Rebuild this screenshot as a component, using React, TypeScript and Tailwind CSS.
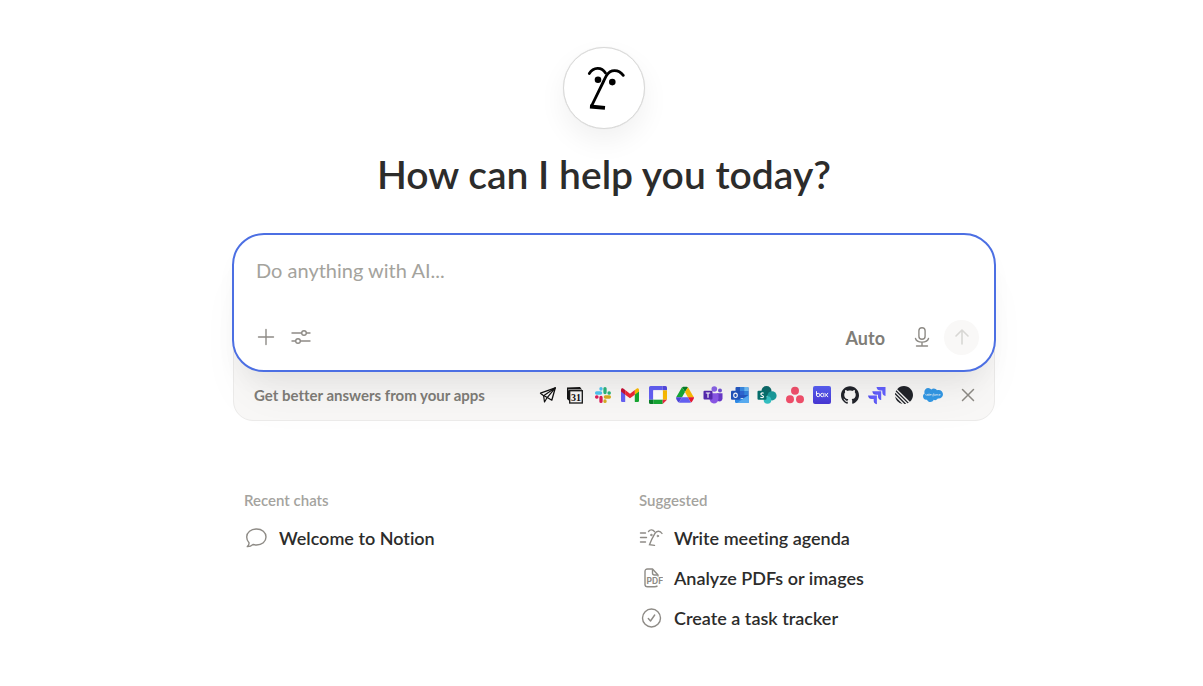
import type { ReactNode } from "react";
import { FaSalesforce } from "react-icons/fa";
import { SiGithub, SiLinear } from "react-icons/si";

function NotionFace() {
  return (
    <svg width="40" height="46" viewBox="0 0 40 46" fill="none" aria-hidden="true">
      <path d="M3.300 8.500C7.500 2 15.500 1.700 19.500 8" stroke="#000" strokeWidth="2.800" strokeLinecap="round" />
      <path d="M37.300 10.300C32.500 4 24.500 4 20.800 10C19.500 12 18.500 14.500 17 17.500L5.300 41.500" stroke="#000" strokeWidth="2.800" strokeLinecap="round" />
      <path d="M4 41.500L19 42.800" stroke="#000" strokeWidth="3.800" />
      <circle cx="12" cy="14.800" r="3.300" fill="#000" />
      <circle cx="26.300" cy="17.100" r="3.300" fill="#000" />
    </svg>
  );
}

function AppIcon({ label, children }: { label: string; children: ReactNode }) {
  return (
    <svg className="size-[18px] shrink-0 overflow-visible" viewBox="0 0 18 18" fill="none" role="img" aria-label={label}>
      {children}
    </svg>
  );
}

function ConnectedApps() {
  return (
    <div className="flex w-[404px] shrink-0 items-center justify-between">
      <AppIcon label="Notion Mail">
        <path d="M1.500 7.200L16.300 1.800L12.800 14.200L7.900 11.300L4 9.200Z" stroke="#111" strokeWidth="1.300" strokeLinejoin="round" />
        <path d="M16.300 1.800L4.600 9.700L5.500 16L8 11.800Z" stroke="#111" strokeWidth="1.200" strokeLinejoin="round" />
      </AppIcon>
      <AppIcon label="Notion Calendar">
        <path d="M1 1.500L14 1L15.500 3V4H4V15.500L1 13Z" fill="#161616" />
        <path d="M2.200 3.800H15" stroke="#f4f3f2" strokeWidth="0.800" />
        <rect x="3.700" y="4.700" width="12.600" height="12.300" fill="#f8f7f6" stroke="#161616" strokeWidth="1.300" />
        <text x="10" y="14.600" textAnchor="middle" fontFamily="Liberation Serif, serif" fontSize="10" fontWeight="700" fill="#111">31</text>
      </AppIcon>
      <AppIcon label="Slack">
        <g strokeWidth="3.300" strokeLinecap="round">
          <path d="M2.600 7H6.600M7 2.600V3" stroke="#50c5f1" />
          <path d="M11 2.600V6.600M15 7H15.300" stroke="#2bb67d" />
          <path d="M11.400 11H15.400M11 15V15.400" stroke="#d8ae22" />
          <path d="M7 11.400V15.400M2.600 11H3" stroke="#dc1d59" />
        </g>
      </AppIcon>
      <AppIcon label="Gmail">
        <path d="M0 5L4.200 8V16H1.300Q0 16 0 14.700Z" fill="#6661f5" />
        <path d="M18 5L13.800 8V16H16.700Q18 16 18 14.700Z" fill="#18a832" />
        <path d="M13.800 4L15.500 2.700C17 1.800 18 2.700 18 4V5.500L13.800 8.700Z" fill="#fbbc04" />
        <path d="M4.200 4L9 7.700L13.800 4V8.700L9 12.300L4.200 8.700Z" fill="#ef2636" />
        <path d="M0 4C0 2.500 1.200 1.800 2.500 2.700L4.200 4V8.700L0 5.500Z" fill="#c90f35" />
      </AppIcon>
      <AppIcon label="Google Calendar">
        <path d="M0 1.500Q0 0 1.500 0H13.700V4.300H4.300V13.700H0Z" fill="#6461f5" />
        <path d="M13.700 0H16.500Q18 0 18 1.500V4.300H13.700Z" fill="#554ae0" />
        <path d="M13.700 4.300H18V13.700H13.700Z" fill="#fbbc04" />
        <path d="M4.300 4.300H13.700V13.700H4.300Z" fill="#fff" />
        <path d="M4.300 13.700H13.700V18H4.300Z" fill="#16a834" />
        <path d="M0 13.700H4.300V18H1.500Q0 18 0 16.500Z" fill="#088029" />
        <path d="M13.700 13.700H18L13.700 18Z" fill="#eb2840" />
      </AppIcon>
      <AppIcon label="Google Drive">
        <path d="M6 1.200Q6.500 0.800 7.200 0.800H10.800Q11.500 0.800 12 1.200L9 6Z" fill="#08812a" />
        <path d="M0.300 11L6 1.200L9 6L6 11.300H0Z" fill="#17a837" />
        <path d="M12 1.200L17.700 11L17.900 11.500H12L9 6Z" fill="#fbbc04" />
        <path d="M6 11.300H12L14.900 16.500Q14.500 16.700 14 16.700H4Q3.400 16.700 3 16.500Z" fill="#6561f5" />
        <path d="M0.100 11.300H6L3 16.600Q2 16.200 1.500 15.300L0.200 13Z" fill="#5049dd" />
        <path d="M12 11.300H18Q18 12.300 17.600 13L16.300 15.300Q15.800 16.200 15 16.600Z" fill="#e91835" />
      </AppIcon>
      <AppIcon label="Microsoft Teams">
        <circle cx="16" cy="4.500" r="2" fill="#7352d3" />
        <circle cx="10.300" cy="3" r="2.800" fill="#8b65e9" />
        <path d="M13 7.200H18.500V12.500Q18 15.500 15.500 15.500Q13.500 15.500 12 13Z" fill="#6b3bcb" />
        <path d="M6 7.200H14.500V12.500Q14 17.500 9.800 17.500Q6.200 17.200 5.500 13Z" fill="#8b58e8" />
        <rect x="-0.500" y="4.800" width="9" height="8.800" rx="1" fill="#572ab0" />
        <path d="M1.800 7H6.200M4 7V11.700" stroke="#fff" strokeWidth="1.200" />
      </AppIcon>
      <AppIcon label="Outlook">
        <rect x="4.500" y="1" width="13" height="11" rx="1" fill="#275ac4" />
        <path d="M9 1H13.200V5H9Z" fill="#3a8ce6" />
        <path d="M13.200 1H16.500Q17.500 1 17.500 2V5H13.200Z" fill="#70bff7" />
        <path d="M9 5H13.200V9H9Z" fill="#2f67d5" />
        <path d="M13.200 5H17.500V9H13.200Z" fill="#3588e1" />
        <path d="M4 9L11 13L18 8.700V15.700Q18 17 16.700 17H5.300Q4 17 4 15.700Z" fill="#2f8be9" />
        <path d="M18 9L6 17H16.700Q18 17 18 15.700Z" fill="#59aef4" />
        <rect x="0" y="4.800" width="9" height="9" rx="1" fill="#2355bd" />
        <ellipse cx="4.500" cy="9.300" rx="1.800" ry="2.200" stroke="#fff" strokeWidth="1.100" />
      </AppIcon>
      <AppIcon label="SharePoint">
        <circle cx="8.500" cy="5" r="5" fill="#0d6b6b" />
        <circle cx="14" cy="9.800" r="4.600" fill="#1a9b9b" />
        <circle cx="9.500" cy="14" r="3.800" fill="#35c1c3" />
        <rect x="-0.500" y="4.800" width="9" height="9" rx="1" fill="#07716f" />
        <path d="M5.700 7.300C3.500 6.200 1.700 8.300 4 9.300C6.800 10.300 5.200 12.500 2.300 11.300" stroke="#fff" strokeWidth="1.200" />
      </AppIcon>
      <AppIcon label="Asana">
        <circle cx="9" cy="4.700" r="4" fill="#f2506c" />
        <circle cx="4" cy="13.200" r="4" fill="#f2506c" />
        <circle cx="14" cy="13.200" r="4" fill="#f2506c" />
      </AppIcon>
      <AppIcon label="Box">
        <defs>
          <linearGradient id="box-fill" x1="0" y1="0" x2="0" y2="1">
            <stop stopColor="#5961f6" />
            <stop offset="1" stopColor="#4837d4" />
          </linearGradient>
        </defs>
        <rect width="18" height="18" rx="2" fill="url(#box-fill)" />
        <g stroke="#fff" strokeWidth="1">
          <path d="M3.500 5.200V9" />
          <circle cx="5.200" cy="9" r="1.700" />
          <circle cx="9.300" cy="9" r="1.700" />
          <path d="M11.800 7.200L14.800 10.800M14.800 7.200L11.800 10.800" strokeLinecap="round" />
        </g>
      </AppIcon>
      <SiGithub className="size-[18px] shrink-0 text-[#22242b]" aria-label="GitHub" />
      <AppIcon label="Jira">
        <defs>
          <linearGradient id="jira-fill" x1="1" y1="0" x2="0" y2="1">
            <stop offset="0.400" stopColor="#6461ff" />
            <stop offset="1" stopColor="#2b20b8" />
          </linearGradient>
        </defs>
        <path d="M8.500 1H17.500V10Q14.300 9.500 14.300 6V4.500H12.500Q9 4.500 8.500 1Z" fill="#6461ff" />
        <path d="M4.300 5.200H13.200V14Q10 13.500 10 10.200V8.700H8.300Q4.800 8.700 4.300 5.200Z" fill="url(#jira-fill)" />
        <path d="M0 9.400H8.900V18.300Q5.700 17.800 5.700 14.500V13H4Q0.500 12.900 0 9.400Z" fill="url(#jira-fill)" />
      </AppIcon>
      <SiLinear className="size-[18px] shrink-0 text-[#22242a]" aria-label="Linear" />
      <FaSalesforce className="h-[18px] w-5 shrink-0 text-[#3499e6]" aria-label="Salesforce" />
    </div>
  );
}

function Composer() {
  return (
    <form className="relative -mx-px rounded-[32px] border-2 border-[#4c6fe3] bg-white px-[15px] pt-5 pb-[15px] shadow-[0_14px_24px_-6px_rgba(0,0,0,0.05),0_36px_48px_-12px_rgba(0,0,0,0.05)]" onSubmit={(e) => e.preventDefault()}>
      <textarea
        aria-label="Message"
        rows={2}
        placeholder="Do anything with AI..."
        className="block h-16 w-full resize-none bg-transparent px-[7px] pt-px text-[20px] leading-7 text-[#2c2c2b] outline-none placeholder:text-[#a4a39d]"
      />
      <div className="flex h-9 items-center text-[#8e8b86]">
        <button type="button" aria-label="Add attachment" className="flex size-[34px] items-center justify-center">
          <svg width="18" height="18" viewBox="0 0 18 18" fill="none" stroke="currentColor" strokeWidth="1.400" strokeLinecap="round">
            <path d="M9 1.500V16.500M1.500 9H16.500" />
          </svg>
        </button>
        <button type="button" aria-label="Settings" className="flex size-9 items-center justify-center">
          <svg width="20" height="18" viewBox="0 0 20 18" fill="none" stroke="currentColor" strokeWidth="1.400" strokeLinecap="round">
            <path d="M1 5H10.400M15.600 5H19M1 13H4.400M9.600 13H19" />
            <circle cx="13" cy="5" r="2.300" />
            <circle cx="7" cy="13" r="2.300" />
          </svg>
        </button>
        <button type="button" className="ml-auto px-2 pt-[2px] text-[18px] font-bold text-[#7f7d78]">Auto</button>
        <button type="button" aria-label="Voice input" className="ml-3 flex size-[34px] items-center justify-center">
          <svg width="16" height="22" viewBox="0 0 16 22" fill="none" stroke="currentColor" strokeWidth="1.400" strokeLinecap="round">
            <rect x="4.900" y="1.700" width="6.200" height="11.600" rx="3.100" />
            <path d="M1.500 12.500C2.700 17.300 13.300 17.300 14.500 12.500M8 16.200V19.800M2.500 20H13.500" />
          </svg>
        </button>
        <button type="submit" aria-label="Send" className="ml-[5px] flex size-[35px] items-center justify-center rounded-full bg-[#f9f8f7] text-[#d8d7d4]">
          <svg width="16" height="18" viewBox="0 0 16 18" fill="none" stroke="currentColor" strokeWidth="1.600" strokeLinecap="round" strokeLinejoin="round">
            <path d="M8 16V2M2 8L8 2L14 8" />
          </svg>
        </button>
      </div>
    </form>
  );
}

function ChatIcon() {
  return (
    <svg width="24" height="20" viewBox="-1 0 24 20" fill="none" stroke="#8e8b86" strokeWidth="1.400" strokeLinejoin="round" aria-hidden="true">
      <path d="M11.500 1C17 1 21 4.500 21 9C21 13.500 17 17 11.500 17C10.200 17 9 16.800 8 16.500C6.500 17.800 4.500 18.700 2.300 18.600C3.500 17.500 4.200 16 4 14.700C2.500 13.200 1.700 11.200 1.700 9C1.700 4.500 6 1 11.500 1Z" />
    </svg>
  );
}

function AgendaIcon() {
  return (
    <svg width="24" height="20" viewBox="0 0 24 20" fill="none" stroke="#8e8b86" strokeWidth="1.400" strokeLinecap="round" aria-hidden="true">
      <path d="M1.500 5H6.500M1.500 9.500H7.500M1.500 14H6.500" />
      <path d="M9.500 3.500C11.200 1.200 14 1.500 15.500 3.700" />
      <path d="M23 5.500C21 2.300 17.500 2.800 15.800 5.700C14 8.800 12 12.500 10.500 16.700L15.500 17.400" />
      <circle cx="12.300" cy="7" r="0.800" fill="#8e8b86" strokeWidth="0.800" />
      <circle cx="18.800" cy="8" r="0.800" fill="#8e8b86" strokeWidth="0.800" />
    </svg>
  );
}

function PdfIcon() {
  return (
    <svg width="24" height="20" viewBox="0 0 24 20" fill="none" stroke="#8e8b86" strokeWidth="1.400" strokeLinejoin="round" aria-hidden="true">
      <path d="M6 17V3.500Q6 1 8.500 1H13.500L19 7V8.500M6 16.500Q6 18.800 8.500 18.800H15.500Q17.500 18.800 18.500 17.800" />
      <path d="M13.500 1.500V5Q13.500 7 15.500 7H18.500" />
      <text x="7.500" y="16.300" fontFamily="Inter, sans-serif" fontSize="8.500" fontWeight="700" fill="#8e8b86" stroke="none">PDF</text>
    </svg>
  );
}

function CheckIcon() {
  return (
    <svg width="24" height="20" viewBox="0 0 24 20" fill="none" stroke="#8e8b86" strokeWidth="1.400" strokeLinecap="round" strokeLinejoin="round" aria-hidden="true">
      <circle cx="12.500" cy="10" r="9" />
      <path d="M9.300 10.500L11.500 13L15.700 7" />
    </svg>
  );
}

function LinkList({ title, items }: { title: string; items: { label: string; icon: ReactNode }[] }) {
  return (
    <section>
      <h2 className="text-[15px] leading-5 font-semibold text-[#a4a39e]">{title}</h2>
      <ul className="mt-2">
        {items.map((item) => (
          <li key={item.label}>
            <a href="#" className="flex h-10 items-center text-[18px] font-semibold text-[#2c2c2b]">
              <span className="flex w-[35px] shrink-0">{item.icon}</span>
              <span className="pt-px">{item.label}</span>
            </a>
          </li>
        ))}
      </ul>
    </section>
  );
}

export default function App() {
  return (
    <main className="min-h-screen bg-white pt-[47px] pl-[5px] font-['Lato',sans-serif] [font-variant-ligatures:none]">
      <div className="mx-auto max-w-[782px]">
        <div className="mx-auto flex size-[82px] items-center justify-center rounded-full border border-[#d9d9d8] bg-white pl-1 shadow-[0_0_1px_rgba(0,0,0,0.12),0_12px_28px_rgba(0,0,0,0.06)]">
          <NotionFace />
        </div>
        <h1 className="mt-5 text-center text-[39px] leading-[50px] font-semibold text-[#2c2c2b]">How can I help you today?</h1>
        <div className="mt-[34px] ml-5">
          <Composer />
          <div className="-mt-8 flex items-center rounded-b-[20px] border border-[#ecebea] bg-[#f9f8f7] pt-[44px] pr-[17px] pb-[15px] pl-5">
            <p className="text-[15px] leading-5 font-bold text-[#7f7d78]">Get better answers from your apps</p>
            <div className="ml-auto flex items-center">
              <ConnectedApps />
              <button type="button" aria-label="Dismiss" className="ml-4 flex size-[18px] items-center justify-center text-[#8e8b86]">
                <svg width="14" height="14" viewBox="0 0 14 14" stroke="currentColor" strokeWidth="1.500" strokeLinecap="round">
                  <path d="M1.500 1.500L12.500 12.500M12.500 1.500L1.500 12.500" />
                </svg>
              </button>
            </div>
          </div>
        </div>
        <div className="mt-[69px] ml-[31px] grid grid-cols-2 gap-x-[39px]">
          <LinkList title="Recent chats" items={[{ label: "Welcome to Notion", icon: <ChatIcon /> }]} />
          <LinkList
            title="Suggested"
            items={[
              { label: "Write meeting agenda", icon: <AgendaIcon /> },
              { label: "Analyze PDFs or images", icon: <PdfIcon /> },
              { label: "Create a task tracker", icon: <CheckIcon /> },
            ]}
          />
        </div>
      </div>
    </main>
  );
}
